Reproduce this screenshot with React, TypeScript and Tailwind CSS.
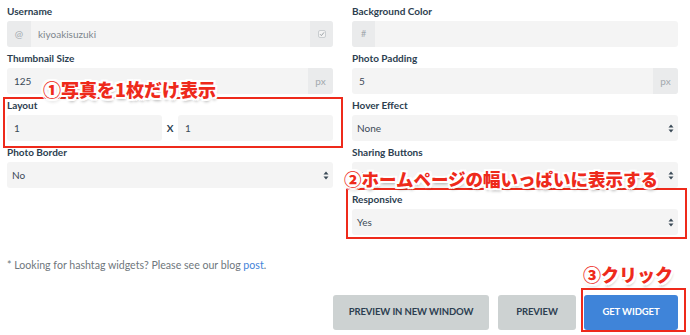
import { ReactNode } from 'react';

const labelCls = 'block h-[15px] mb-[2px] text-[10px] leading-[15px] font-bold text-[#2c3e50]';
const boxCls = 'h-[26px] rounded-[3px] bg-[#f4f4f4] text-[10px] text-[#3b4a57] flex items-center';

function Group({ label, children }: { label: string; children: ReactNode }) {
  return (
    <div className="mb-[4px]">
      <label className={labelCls}>{label}</label>
      {children}
    </div>
  );
}

function SelectArrows() {
  return (
    <svg width="6" height="9" viewBox="0 0 6 9" className="text-[#3b4a57]">
      <path d="M3 0.5 L5.5 3.5 H0.5 Z" fill="currentColor" />
      <path d="M3 8.5 L5.5 5.5 H0.5 Z" fill="currentColor" />
    </svg>
  );
}

function Select({ value }: { value: string }) {
  return (
    <div className={`${boxCls} justify-between pl-[5px] pr-[4px]`}>
      <span>{value}</span>
      <SelectArrows />
    </div>
  );
}

function Addon({ children, className = '' }: { children: ReactNode; className?: string }) {
  return (
    <div className={`h-full flex items-center justify-center bg-[#eaebec] text-[#a3a9ae] ${className}`}>
      {children}
    </div>
  );
}

const annot =
  "absolute font-black text-[#ee2a1b] whitespace-nowrap [font-family:'Noto_Sans_CJK_JP',sans-serif] [text-shadow:1px_1px_0_#fff,-1px_-1px_0_#fff,1px_-1px_0_#fff,-1px_1px_0_#fff,0_2px_0_#fff,0_-2px_0_#fff,2px_0_0_#fff,-2px_0_0_#fff,2px_2px_0_#fff,-2px_2px_0_#fff,2px_-2px_0_#fff,-2px_-2px_0_#fff,1px_3px_3px_rgba(0,0,0,0.3)]";

const btnCls = 'h-[35px] rounded-[3px] text-[9.5px] font-bold tracking-[-0.1px]';

export default function App() {
  return (
    <div className="relative w-[690px] h-[335px] overflow-hidden bg-white [font-family:Lato,'Liberation_Sans',sans-serif]">
      <div className="pt-[4px] pl-[7px] pr-[12px]">
        <div className="grid grid-cols-2 gap-x-[19px]">
          {/* left column */}
          <div>
            <Group label="Username">
              <div className={`${boxCls} overflow-hidden`}>
                <Addon className="w-[24px] text-[10px]">@</Addon>
                <span className="flex-1 pl-[7px] text-[#7d868d]">kiyoakisuzuki</span>
                <Addon className="w-[23px]">
                  <span className="w-[8px] h-[8px] rounded-[2px] border border-[#c9cdd0] bg-[#f3f3f3] flex items-center justify-center">
                    <svg width="6" height="6" viewBox="0 0 6 6">
                      <path d="M1 3.2 L2.4 4.6 L5 1.4" stroke="#9aa0a5" strokeWidth="1" fill="none" />
                    </svg>
                  </span>
                </Addon>
              </div>
            </Group>
            <Group label="Thumbnail Size">
              <div className={`${boxCls} overflow-hidden`}>
                <span className="flex-1 pl-[7px]">125</span>
                <Addon className="w-[25px] text-[10px]">px</Addon>
              </div>
            </Group>
            <Group label="Layout">
              <div className="flex items-center">
                <div className={`${boxCls} flex-1 pl-[7px]`}>1</div>
                <span className="w-[16px] text-center text-[10px] font-bold text-[#2c3e50]">X</span>
                <div className={`${boxCls} flex-1 pl-[7px]`}>1</div>
              </div>
            </Group>
            <Group label="Photo Border">
              <Select value="No" />
            </Group>
          </div>
          {/* right column */}
          <div>
            <Group label="Background Color">
              <div className={`${boxCls} overflow-hidden`}>
                <Addon className="w-[23px] text-[9px]">#</Addon>
                <span className="flex-1" />
              </div>
            </Group>
            <Group label="Photo Padding">
              <div className={`${boxCls} overflow-hidden`}>
                <span className="flex-1 pl-[7px]">5</span>
                <Addon className="w-[25px] text-[10px]">px</Addon>
              </div>
            </Group>
            <Group label="Hover Effect">
              <Select value="None" />
            </Group>
            <Group label="Sharing Buttons">
              <Select value="Yes" />
            </Group>
            <Group label="Responsive">
              <Select value="Yes" />
            </Group>
          </div>
        </div>

        <p className="mt-[19px] text-[10.6px] leading-[14px] text-[#6f777d]">
          * Looking for hashtag widgets? Please see our blog <a className="text-[#3f84d9]">post</a>.
        </p>

        <div className="mt-[23px] flex justify-end gap-[8px]">
          <button className={`${btnCls} w-[156px] bg-[#cdd2d2] text-[#2c3e50]`}>PREVIEW IN NEW WINDOW</button>
          <button className={`${btnCls} ml-[1px] w-[78px] bg-[#cdd2d2] text-[#2c3e50]`}>PREVIEW</button>
          <button className={`${btnCls} w-[94px] bg-[#3f84d9] text-white`}>GET WIDGET</button>
        </div>
      </div>

      {/* annotations */}
      <div className="absolute left-[3px] top-[97px] w-[340px] h-[51px] border-2 border-[#ee2a1b]" />
      <div className="absolute left-[346px] top-[188px] w-[341px] h-[51px] border-2 border-[#ee2a1b]" />
      <div className="absolute left-[581px] top-[288px] w-[105px] h-[44px] border-2 border-[#ee2a1b]" />
      <span className={`${annot} left-[43px] top-[77px] text-[18px] leading-[24px]`}>①写真を1枚だけ表示</span>
      <span className={`${annot} left-[344px] top-[167px] text-[17.5px] leading-[24px]`}>②ホームページの幅いっぱいに表示する</span>
      <span className={`${annot} left-[583px] top-[262px] text-[18px] leading-[24px]`}>③クリック</span>
    </div>
  );
}
